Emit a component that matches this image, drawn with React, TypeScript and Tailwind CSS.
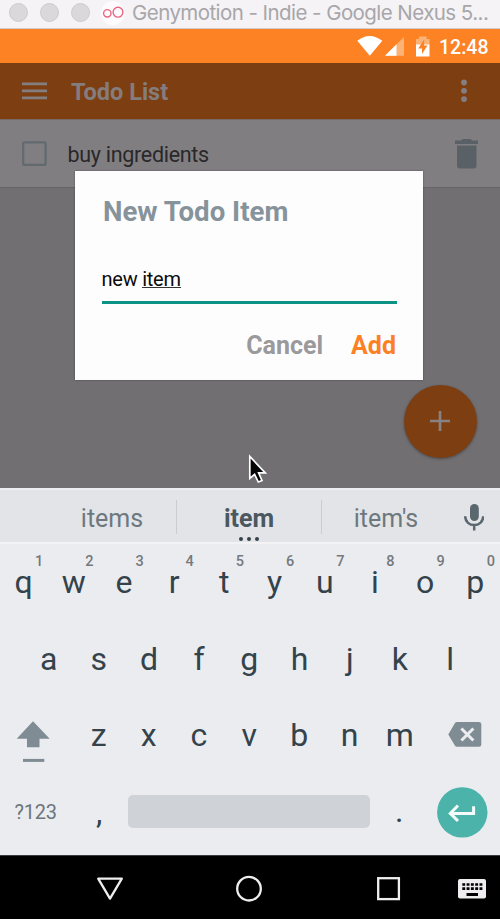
import React from "react";

const topRow: [string, string][] = [
  ["q", "1"],
  ["w", "2"],
  ["e", "3"],
  ["r", "4"],
  ["t", "5"],
  ["y", "6"],
  ["u", "7"],
  ["i", "8"],
  ["o", "9"],
  ["p", "0"],
];
const middleRow = ["a", "s", "d", "f", "g", "h", "j", "k", "l"];
const bottomRow = ["z", "x", "c", "v", "b", "n", "m"];

function Key({ label, hint }: { label: string; hint?: string }) {
  return (
    <div className="relative flex h-full w-[50.2px] shrink-0 items-center justify-center text-[32px] leading-none text-[#34434b]">
      {label}
      {hint && (
        <span className="absolute top-[10.5px] left-[36.5px] text-[14.5px] leading-[14px] font-medium text-[#75797e]">
          {hint}
        </span>
      )}
    </div>
  );
}

function WindowTitle() {
  return (
    <div className="flex h-[29px] items-center border-b border-[#cfcbd0] bg-[#f5f3f6] pb-[3px] pl-[9px]">
      <div className="flex gap-[12px]">
        <span className="size-[19px] rounded-full border border-[#cdcbce] bg-[#dad8db]" />
        <span className="size-[19px] rounded-full border border-[#cdcbce] bg-[#dad8db]" />
        <span className="size-[19px] rounded-full border border-[#cdcbce] bg-[#dad8db]" />
      </div>
      <svg className="ml-[11px] size-[24px] shrink-0" viewBox="0 0 24 24" fill="none">
        <circle cx="12" cy="12" r="12" fill="#fdfbfd" />
        <circle cx="6.3" cy="12.3" r="3.7" stroke="#e8667c" strokeWidth="1.4" />
        <circle cx="17" cy="11.2" r="4.9" stroke="#e8667c" strokeWidth="1.4" />
      </svg>
      <span className="ml-[7px] font-['Inter','Liberation_Sans',sans-serif] text-[20.5px] leading-[26px] tracking-[-0.56px] whitespace-nowrap text-[#a8a6a9]">
        Genymotion - Indie - Google Nexus 5...
      </span>
    </div>
  );
}

function StatusBar() {
  return (
    <div className="flex h-[34px] items-center bg-[#fd8224] pl-[357px]">
      <svg className="h-[34px] w-[76px] shrink-0" viewBox="357 29 76 34">
        <path d="M357.3 40.8Q369.5 31 382.3 40.8L369.8 55.7Z" fill="#fff" />
        <path d="M404 37V55.7H385Z" fill="#fbb277" />
        <path d="M396.5 44.3V55.7H385Z" fill="#fff" />
        <path d="M416 39h3v-2.5h7.5V39h3v6.5H416Z" fill="#fbb277" />
        <path d="M416 44.5h13.5v12H416Z" fill="#fff" />
        <path d="M424.2 39.5L418.2 48.6H422V54L427.5 45.5H424Z" fill="#fd8224" />
      </svg>
      <span className="ml-[6px] pt-[3px] text-[19.5px] leading-[31px] font-medium text-white">12:48</span>
    </div>
  );
}

function AppBar() {
  return (
    <div className="flex h-[56px] items-center bg-[#7d3f12] pl-[22px]">
      <svg className="h-[18px] w-[25px]" viewBox="0 0 25 18" stroke="#857e80" strokeWidth="2.8">
        <path d="M0 1.8H25M0 8.8H25M0 15.8H25" />
      </svg>
      <span className="ml-[24px] pt-[2px] text-[23.5px] leading-[54px] font-bold text-[#857c7d]">Todo List</span>
      <svg className="ml-auto mr-[33px] h-[24px] w-[6px]" viewBox="0 0 6 24" fill="#857e80">
        <circle cx="3" cy="3.5" r="2.9" />
        <circle cx="3" cy="11.8" r="2.9" />
        <circle cx="3" cy="20.1" r="2.9" />
      </svg>
    </div>
  );
}

function TodoRow() {
  return (
    <div className="flex h-[69px] items-center border-y border-t-[#77696a] border-b-[#656466] bg-[#817e81] pl-[22px]">
      <svg className="size-[25px]" viewBox="0 0 25 25" fill="none">
        <rect x="1.2" y="1.4" width="22.4" height="22.6" rx="1.2" stroke="#626a70" strokeWidth="2.3" />
      </svg>
      <span className="ml-[20.5px] pt-[2px] text-[21.5px] leading-[28px] tracking-[-0.3px] text-[#29282a]">
        buy ingredients
      </span>
      <svg className="mr-[22px] ml-auto h-[30px] w-[23px]" viewBox="0 0 23 30" fill="#596066">
        <path d="M7.5 0H15.5L17 1.5H23V5H0V1.5H6Z" />
        <path d="M2 6.5H21.5V26Q21.5 29.5 18.5 29.5H5Q2 29.5 2 26Z" />
      </svg>
    </div>
  );
}

function Dialog() {
  return (
    <div className="absolute top-[52px] left-[75px] flex h-[209px] w-[348px] flex-col bg-[#fefdfe] px-[27px] pt-[24px] shadow-[0_0_2px_rgba(0,0,0,0.35)]">
      <h2 className="ml-[1px] text-[27.6px] leading-[34px] font-bold whitespace-nowrap text-[#86939b]">New Todo Item</h2>
      <div className="mt-[36px] h-[38.5px] w-[295px] border-b-[3px] border-[#0d9385] text-[20px] leading-[28px] tracking-[-0.25px] whitespace-nowrap text-[#0b0b0b]">
        <span className="-ml-[0.5px]">new </span>
        <span className="inline-block h-[23px] border-b-[1.5px] border-[#333]">item</span>
      </div>
      <div className="mt-[26.5px] flex justify-end text-[25px] leading-[32px] font-bold">
        <span className="text-[#9a999c]">Cancel</span>
        <span className="ml-[28px] text-[#fb8124]">Add</span>
      </div>
    </div>
  );
}

function Suggestions() {
  return (
    <div className="flex h-[56px] items-center border-t-2 border-b-2 border-t-[#eeedf0] border-b-[#f3f3f6] bg-[#e3e4e8] pt-[2px] pl-[48px] text-[25px] text-[#6d787e]">
      <span className="w-[128px] pt-[4px] text-center leading-[32px]">items</span>
      <span className="h-[34px] w-px bg-[#c9ccd0]" />
      <span className="relative w-[144px] pt-[4px] text-center leading-[32px] font-bold text-[#4b5860]">
        item
        <span className="absolute bottom-[-6px] left-[62px] flex gap-[4px]">
          <i className="size-[4px] rounded-full bg-[#34434b]" />
          <i className="size-[4px] rounded-full bg-[#34434b]" />
          <i className="size-[4px] rounded-full bg-[#34434b]" />
        </span>
      </span>
      <span className="h-[34px] w-px bg-[#c9ccd0]" />
      <span className="w-[128px] pt-[4px] text-center leading-[32px]">item's</span>
      <svg className="mb-[1px] ml-[14px] h-[28px] w-[20px]" viewBox="0 0 20 28" fill="none">
        <rect x="6" y="1" width="8.8" height="17" rx="4.4" fill="#5a676e" />
        <path d="M1.2 13.3C1.2 25 19.2 25 19.2 13.3M10.2 22V27.5" stroke="#5a676e" strokeWidth="2.5" />
      </svg>
    </div>
  );
}

function Keyboard() {
  return (
    <div className="h-[311px] bg-[#ebecf0]">
      <div className="-ml-[1.5px] flex h-[76.6px]">
        {topRow.map(([label, hint]) => (
          <Key key={label} label={label} hint={hint} />
        ))}
      </div>
      <div className="ml-[23.5px] flex h-[76.6px]">
        {middleRow.map((label) => (
          <Key key={label} label={label} />
        ))}
      </div>
      <div className="flex h-[76.6px] items-center">
        <svg className="ml-[16px] h-[54px] w-[34px] shrink-0" viewBox="16 708 34 54" fill="#808c93">
          <path d="M33 721.3L49.7 738.8H39.5V747.3H27V738.8H16.7Z" />
          <path d="M23 758.9H44.3V761.9H23Z" />
        </svg>
        <div className="ml-[23.5px] flex h-full">
          {bottomRow.map((label) => (
            <Key key={label} label={label} />
          ))}
        </div>
        <svg className="mb-[2px] ml-[23px] h-[25px] w-[34px] shrink-0" viewBox="0 0 34 25">
          <path d="M9 0H31Q33.3 0 33.3 2.3V22.5Q33.3 24.8 31 24.8H9Q7.7 24.8 7 23.8L0.3 12.4L7 1Q7.7 0 9 0Z" fill="#808c93" />
          <path d="M13.4 6.5L25.4 18.5M25.4 6.5L13.4 18.5" stroke="#ebecf0" strokeWidth="3.1" />
        </svg>
      </div>
      <div className="flex h-[76.6px] items-center">
        <span className="ml-[14.5px] w-[59.5px] text-[20px] tracking-[-0.2px] text-[#6b767d]">?123</span>
        <Key label="," />
        <span className="mb-[1.5px] ml-[4px] h-[33px] w-[242px] rounded-[5px] bg-[#cfd2d6]" />
        <span className="mb-[2px] ml-[4px] h-full">
          <Key label="." />
        </span>
        <svg className="ml-[12.5px] size-[51px] shrink-0" viewBox="437 786 51 51" fill="none">
          <circle cx="462.3" cy="811.4" r="25.2" fill="#4bb3a9" />
          <path d="M473.6 805.3V812.4H450.5M458 804.5L450.3 812.4L458 820" stroke="#f4fbfa" strokeWidth="3" />
        </svg>
      </div>
    </div>
  );
}

function NavigationBar() {
  return (
    <div className="flex h-[64px] items-center border-t border-[#3a3b3d] bg-black">
      <svg className="h-[63px] w-[500px]" viewBox="0 856 500 63" fill="none" stroke="#efedf0" strokeWidth="2.3">
        <path d="M98.2 878.7H121.8L110 898.6Z" strokeLinejoin="round" />
        <circle cx="249" cy="888.7" r="11.8" />
        <rect x="378.2" y="878.2" width="20.7" height="20.9" />
        <rect x="458" y="879" width="28" height="19.5" rx="2" fill="#efedf0" stroke="none" />
        <path d="M462.3 884.5H482.5M462.3 888.7H482.5" stroke="#000" strokeWidth="2.7" strokeDasharray="2.9 1.4" />
        <path d="M466.5 894.5H478" stroke="#000" strokeWidth="3" />
      </svg>
    </div>
  );
}

export default function App() {
  return (
    <div className="flex h-[919px] w-[500px] flex-col overflow-hidden font-['Roboto','Liberation_Sans',sans-serif]">
      <WindowTitle />
      <StatusBar />
      <AppBar />
      <main className="relative h-[369px] bg-[#716f72]">
        <TodoRow />
        <button className="absolute top-[265.5px] left-[403.5px] flex size-[73px] items-center justify-center rounded-full bg-[#7d3f12] shadow-[0_1px_3px_rgba(0,0,0,0.35)]">
          <svg className="size-[20px]" viewBox="0 0 20 20" stroke="#8a8283" strokeWidth="2.6">
            <path d="M10 0V20M0 10H20" />
          </svg>
        </button>
        <Dialog />
        <svg className="absolute top-[334px] left-[247px] h-[32px] w-[22px]" viewBox="247 453 22 32">
          <path
            d="M249.8 456.5V478.5L254.6 474.3L258.3 482L262 480.5L258.6 472.8H265.3Z"
            fill="#050505"
            stroke="#fff"
            strokeWidth="1.7"
          />
        </svg>
      </main>
      <Suggestions />
      <Keyboard />
      <NavigationBar />
    </div>
  );
}
